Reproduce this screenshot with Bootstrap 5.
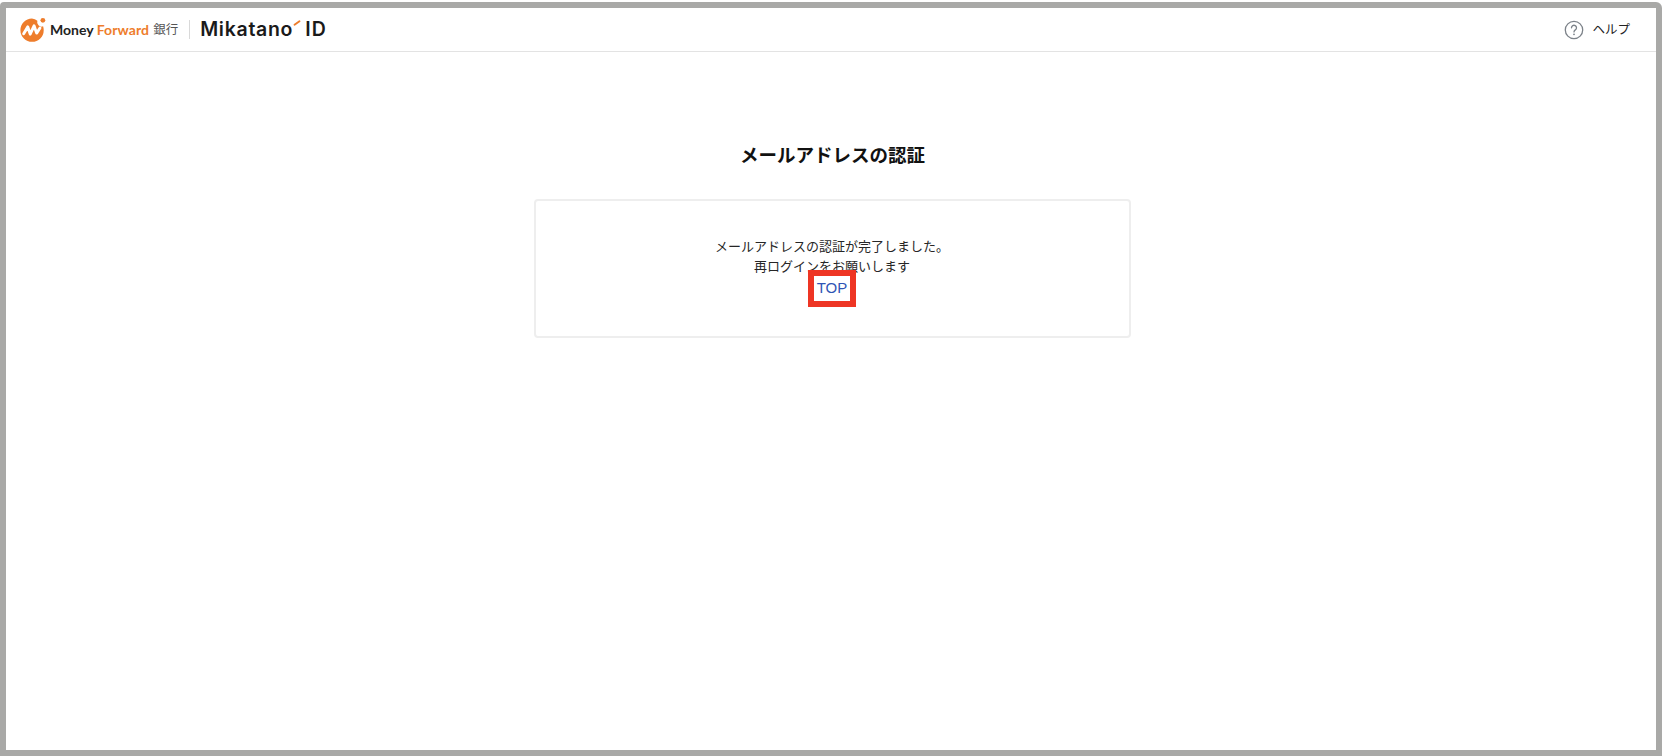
<!DOCTYPE html>
<html lang="ja">
<head>
<meta charset="utf-8">
<title>メールアドレスの認証</title>
<link href="https://cdn.jsdelivr.net/npm/bootstrap@5.3.0/dist/css/bootstrap.min.css" rel="stylesheet">
<style>
html,body{height:100%;margin:0;background:#fff;}
body{font-family:"Liberation Sans","Noto Sans CJK JP",sans-serif;color:#2b2b2b;overflow:hidden;padding-top:2px;}
.frame{height:754px;border:6px solid #a9a9a7;border-radius:4px 6px 0 0;display:flex;flex-direction:column;background:#fff;}
.topbar{height:44px;border-bottom:1px solid #e3e3e3;padding:0 26px 0 14px;flex:none;}
.mf-mark{width:26px;height:26px;flex:none;}
.mf-name{font-family:"Lato",sans-serif;font-weight:700;font-size:14px;margin-left:4px;color:#222;white-space:nowrap;}
.mf-orange{color:#ee7d2c;letter-spacing:.1px;}
.mf-bank{font-family:"Noto Sans CJK JP",sans-serif;font-size:12.5px;color:#555;margin-left:4px;white-space:nowrap;}
.logo-sep{width:1px;height:19px;background:#d9d9d9;margin:0 10px 0 11px;}
.mika{font-family:"Inter",sans-serif;font-weight:600;font-size:19.5px;letter-spacing:.7px;color:#1a1a1a;white-space:nowrap;}
.mika-tick{position:relative;display:inline-block;}
.mika-tick::after{content:"";position:absolute;right:-8px;top:7px;width:8px;height:2px;background:#ee7d2c;transform:rotate(-35deg);border-radius:1px;}
.mika-id{margin-left:12px;letter-spacing:1.2px;}
.help-link{font-family:"Noto Sans CJK JP",sans-serif;font-size:12.5px;color:#222;text-decoration:none;gap:8px;}
.content-area{padding-left:2px;}
.page-title{font-family:"Noto Sans CJK JP",sans-serif;font-size:18.5px;font-weight:700;color:#111;line-height:28px;margin:0;padding:88px 0 0 1px;text-align:center;}
.notice{width:597px;height:139px;margin:31px auto 0;border:2px solid #eeeeee;border-radius:4px;padding-top:35px;font-family:"Noto Sans CJK JP",sans-serif;font-size:13px;line-height:20px;text-align:center;color:#262626;}
.notice-top{font-family:"Liberation Sans",sans-serif;font-size:15px;color:#2f55b5;text-decoration:none;position:relative;display:inline-block;top:2px;}
.hl-box{position:absolute;left:-9px;right:-9px;top:-8px;bottom:-9px;border:6px solid #ee3524;pointer-events:none;}
</style>
</head>
<body>
<div class="frame">
  <header class="topbar d-flex align-items-center justify-content-between">
    <div class="d-flex align-items-center">
      <svg class="mf-mark" viewBox="0 0 25 25" aria-hidden="true">
        <path d="M11.500 1.500a11.200 11.200 0 1 0 11.300 11.200c0-1.300-.2-2.500-.6-3.700a4.300 4.300 0 0 1-5.500-5.400A11.300 11.300 0 0 0 11.500 1.500z" fill="#ee7d2c"/>
        <circle cx="22" cy="3.200" r="2.300" fill="#ee7d2c"/>
        <path d="M3.500 16l4-6.500 2.300 7 3.700-8 2.500 7 3.200-5" fill="none" stroke="#fff" stroke-width="2.800" stroke-linejoin="round" stroke-linecap="round"/>
      </svg>
      <span class="mf-name">Money <span class="mf-orange">Forward</span></span>
      <span class="mf-bank">銀行</span>
      <span class="logo-sep"></span>
      <span class="mika"><span class="mika-tick">Mikatano</span><span class="mika-id">ID</span></span>
    </div>
    <a href="#" class="help-link d-flex align-items-center">
      <svg width="20" height="20" viewBox="0 0 20 20" aria-hidden="true">
        <circle cx="10" cy="10" r="8.700" fill="none" stroke="#7c8289" stroke-width="1.300"/>
        <path d="M7.500 7.800a2.500 2.500 0 1 1 3.800 2.100c-.9.600-1.300 1-1.300 2" fill="none" stroke="#7c8289" stroke-width="1.300" stroke-linecap="round"/>
        <circle cx="10" cy="14.300" r=".9" fill="#7c8289"/>
      </svg>
      <span>ヘルプ</span>
    </a>
  </header>
  <main class="flex-grow-1 content-area">
    <h1 class="page-title">メールアドレスの認証</h1>
    <div class="notice">
      メールアドレスの認証が完了しました。<br>
      再ログインをお願いします<br>
      <a href="#" class="notice-top">TOP<span class="hl-box"></span></a>
    </div>
  </main>
</div>
<script src="https://cdn.jsdelivr.net/npm/bootstrap@5.3.0/dist/js/bootstrap.bundle.min.js"></script>
</body>
</html>
